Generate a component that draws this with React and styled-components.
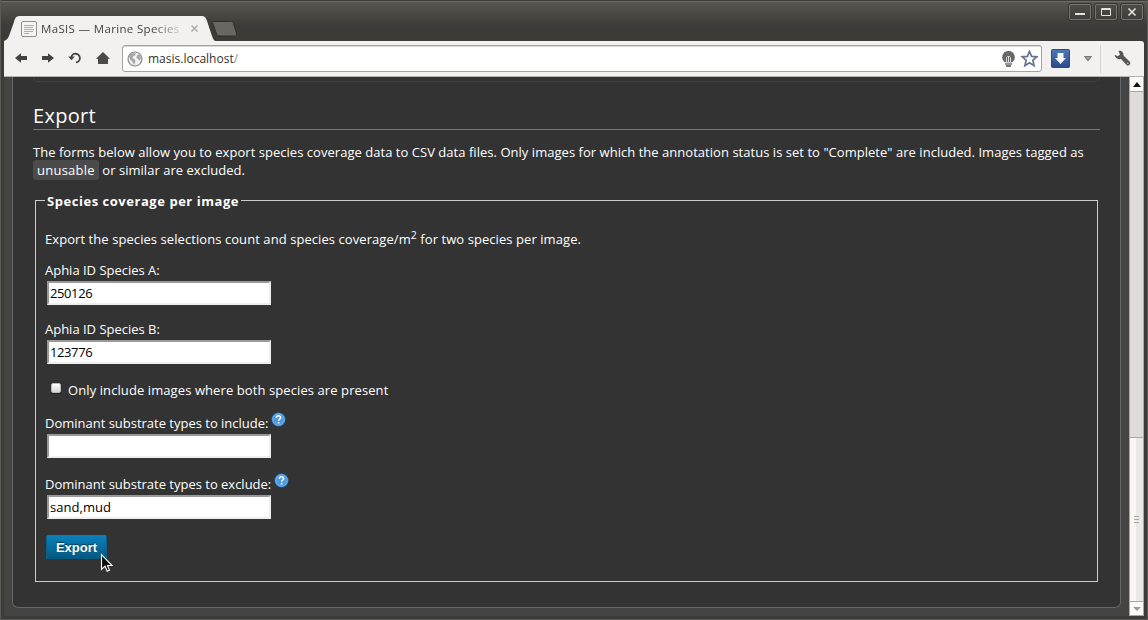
import React from "react";
import styled, { createGlobalStyle } from "styled-components";

const Global = createGlobalStyle`
  * { box-sizing: border-box; }
  html, body { margin: 0; padding: 0; overflow: hidden; }
  body { font-family: "Open Sans", "Noto Sans", sans-serif; font-size: 13px; }
  svg { display: block; flex: none; }
`;

const Window = styled.div`
  position: relative;
  width: 1148px;
  height: 620px;
  display: flex;
  flex-direction: column;
  background: linear-gradient(#5a5952 0, #57564f 2px, #3c3b37 26px, #3c3b37 100%);
  border: solid #5a5a56;
  border-width: 0 1px 1px;
  box-shadow: inset 0 1px #3d3d3b, inset 0 2px #6d6c66;
  padding: 0 3px 3px;
`;

const TitleBar = styled.div`
  height: 41px;
  flex: none;
  display: flex;
  align-items: flex-end;
`;

const Tab = styled.div`
  position: relative;
  z-index: 0;
  width: 212px;
  height: 25px;
  display: flex;
  align-items: center;
  padding-left: 17px;
`;

const TabShape = styled.svg`
  position: absolute;
  z-index: -1;
  left: 0;
  top: 0;
`;

const TabTitle = styled.div`
  width: 143px;
  margin-left: 4px;
  margin-right: 6px;
  white-space: nowrap;
  font-size: 11.5px;
  line-height: 18px;
  color: #44443f;
  letter-spacing: 0.34px;
  mask-image: linear-gradient(90deg, #000 112px, transparent 145px);
`;

const NewTab = styled.svg`
  margin: 0 auto 3px -4px;
`;

const WindowButtons = styled.div`
  display: flex;
  gap: 4px;
  align-self: flex-start;
  margin: 4px 1px 0 0;
`;

const WindowButton = styled.div`
  width: 22px;
  height: 16px;
  border: 1px solid #75746d;
  border-radius: 2px;
  background: linear-gradient(#4c4b45, #403f3a);
  box-shadow: 0 0 0 1px #383733;
`;

const Toolbar = styled.div`
  height: 36px;
  flex: none;
  display: flex;
  align-items: center;
  background: #f2f1f0;
  border-bottom: 1px solid #b5b4b2;
  border-radius: 0 3px 0 0;
  padding: 0 12px 0 9px;
`;

const NavIcons = styled.div`
  display: flex;
  gap: 11px;
  width: 109px;
  margin-top: -1px;
`;

const AddressBar = styled.div`
  width: 920px;
  height: 27px;
  display: flex;
  align-items: center;
  padding: 0 3px 0 4px;
  background: #fff;
  border: 1px solid #a3a29f;
  border-radius: 3px;
  box-shadow: inset 0 1px #d9d9d9;
`;

const Url = styled.div`
  flex: 1;
  margin-left: 5px;
  font-size: 12px;
  line-height: 18px;
  color: #33332f;
  span { color: #8b8b8b; }
`;

const AddressIcons = styled.div`
  display: flex;
  gap: 4px;
  align-items: center;
`;

const Extension = styled.div`
  display: flex;
  align-items: center;
  gap: 14px;
  margin-left: 9px;
`;

const Divider = styled.div`
  width: 1px;
  height: 28px;
  margin: 0 13px 0 8px;
  background: #d4d3d1;
`;

const Viewport = styled.div`
  flex: 1;
  min-height: 0;
  display: flex;
  background: #444;
`;

const Panel = styled.main`
  flex: 1;
  margin: 0 8px;
  height: 531px;
  padding: 0 20px;
  color: #fff;
  background: #333;
  border: 1px solid #666;
  border-top: 0;
  border-radius: 0 0 6px 6px;
  line-height: 18px;
`;

const PreviousSection = styled.div`
  height: 5px;
  border: 1px solid #414141;
  border-top: 0;
  border-radius: 0 0 5px 5px;
`;

const Heading = styled.h2`
  height: 26px;
  margin: 22px 0 13px;
  border-bottom: 1px solid #777;
  font-size: 20px;
  line-height: 24px;
  font-weight: 400;
  letter-spacing: 0.3px;
`;

const Intro = styled.p`
  margin: 0 0 12px;
  letter-spacing: 0.034px;
`;

const Tag = styled.span`
  padding: 1px 4px;
  border-radius: 3px;
  background: #4b4b4b;
  letter-spacing: 0.25px;
`;

const Fieldset = styled.fieldset`
  height: 391px;
  margin: 0 2px;
  padding: 0 9px;
  border: 1px solid #ccc;
`;

const Legend = styled.legend`
  height: 18px;
  padding: 0 2px;
  font-weight: 700;
  line-height: 20px;
  letter-spacing: 0.54px;
`;

const Description = styled.p`
  height: 18px;
  margin: 21px 0 13px;
  letter-spacing: 0.07px;
  sup { font-size: 10.5px; line-height: 0; vertical-align: 5px; }
`;

const Field = styled.div`
  margin-bottom: ${(p) => p.$gap}px;
`;

const FieldLabel = styled.label`
  display: flex;
  height: 18px;
  white-space: nowrap;
  letter-spacing: -0.01px;
`;

const HelpIcon = styled.svg`
  margin: -2px 0 0 3px;
`;

const Input = styled.input`
  display: block;
  width: 224px;
  height: 24px;
  margin: 2px 0 0 2px;
  padding: 0 1px;
  border: 2px solid;
  border-color: #999 #eee #eee #999;
  border-radius: 0;
  outline: 0;
  background: #fff;
  color: #000;
  font: inherit;
  letter-spacing: ${(p) => (p.$numeric ? "-0.4px" : "0.05px")};
`;

const CheckRow = styled.label`
  display: flex;
  align-items: center;
  height: 18px;
  margin: 0 0 15px 6px;
  letter-spacing: 0.09px;
`;

const CheckBox = styled.span`
  width: 10px;
  height: 10px;
  margin: -4px 7px 0 0;
  border: 1px solid #bbb;
  border-radius: 2px;
  background: linear-gradient(#fff, #d5d5d5);
  box-shadow: 0 1px 1px #222;
`;

const ExportButton = styled.button`
  display: block;
  width: 61px;
  height: 25px;
  margin-left: 1px;
  padding: 0;
  border: 1px solid;
  border-color: #0c7ab3 #08608f #05415f;
  border-radius: 2px;
  background: linear-gradient(#0b80ba, #04577f);
  color: #fff;
  font: bold 13px/23px "Liberation Sans", Arial, sans-serif;
  text-shadow: 0 -1px 1px #0008;
`;

const ScrollBar = styled.div`
  width: 15px;
  display: flex;
  flex-direction: column;
  background: #dddcda;
  border: solid #aaa8a4;
  border-width: 0 1px;
`;

const ScrollButton = styled.div`
  height: 15px;
  flex: none;
  display: flex;
  align-items: center;
  justify-content: center;
  background: #fbfaf9;
  border: solid #aaa8a4;
  border-width: ${(p) => (p.$top ? "0 0 1px" : "1px 0")};
`;

const Thumb = styled.div`
  height: 164px;
  margin-top: auto;
  display: flex;
  flex-direction: column;
  align-items: center;
  justify-content: center;
  gap: 2px;
  border-top: 1px solid #aaa8a4;
  background: linear-gradient(90deg, #f8f7f6 50%, #eae9e8 50%);
`;

const Grip = styled.i`
  width: 5px;
  height: 1px;
  background: #aaa8a4;
`;

const Pointer = styled.svg`
  position: absolute;
  left: 98px;
  top: 552px;
`;

const Help = () => (
  <HelpIcon width="15" height="15" viewBox="0 0 15 15">
    <circle cx="7.5" cy="7.5" r="7" fill="#2d75c2" />
    <circle cx="7.5" cy="7.5" r="5.8" fill="#4f9add" stroke="#8fc0ea" strokeWidth=".8" />
    <path d="M5.3 5.7C5.5 2.9 9.8 3.1 9.6 5.7c-.1 1.3-2 1.4-2 3.1" fill="none" stroke="#fff" strokeWidth="1.5" />
    <path d="M6.8 10h1.6v1.5H6.8z" fill="#fff" />
  </HelpIcon>
);

const Arrow = ({ flip }) => (
  <svg width="16" height="16" viewBox="0 0 16 16">
    <path transform={flip ? "translate(16) scale(-1 1)" : undefined} d="M2 8 8 3.200v2.900h6v3.800H8v2.900z" fill="#42423f" />
  </svg>
);

function TextField({ label, value, help, gap, numeric }) {
  return (
    <Field $gap={gap}>
      <FieldLabel>{label}{help && <Help />}</FieldLabel>
      <Input defaultValue={value} $numeric={numeric} />
    </Field>
  );
}

export default function App() {
  return (
    <Window>
      <Global />
      <TitleBar>
        <Tab>
          <TabShape width="212" height="25" viewBox="0 0 212 25">
            <path d="M0 25c3-1 4-3 5-5l5-14c1-4 2-6 6-6h181c4 0 5 2 6 5l5 15c1 3 2 5 4 5z" fill="#f2f1f0" />
          </TabShape>
          <svg width="16" height="16" viewBox="0 0 16 16">
            <rect x=".5" y=".5" width="15" height="15" rx="1.5" fill="#f4f4f2" stroke="#90908c" />
            <path d="M3 4.500h10M3 6.500h9M3 8.500h10M3 10.500h9M3 12.500h5" stroke="#b0b0ac" />
          </svg>
          <TabTitle>MaSIS — Marine Species I</TabTitle>
          <svg width="9" height="9" viewBox="0 0 9 9">
            <path d="m1.500 1.500 6 6m0-6-6 6" stroke="#adadaa" strokeWidth="1.600" />
          </svg>
        </Tab>
        <NewTab width="25" height="18" viewBox="0 0 25 18">
          <path d="M1.500 1.500h17c2 0 2.500.5 3 2l3 10c.5 2 0 2.500-2 2.500H8c-2 0-3-.5-3.500-2L.8 3.500C.4 2 .5 1.500 1.500 1.500z" fill="#686762" stroke="#302f2c" />
        </NewTab>
        <WindowButtons>
          <WindowButton>
            <svg width="20" height="14"><path d="M5 8h10v2H5z" fill="#e4e3df" /></svg>
          </WindowButton>
          <WindowButton>
            <svg width="20" height="14"><path d="M5.500 3.500h9v7h-9zM5 4.500h10" fill="none" stroke="#e4e3df" /></svg>
          </WindowButton>
          <WindowButton>
            <svg width="20" height="14"><path d="m6.500 3.500 7 7m0-7-7 7" stroke="#e4e3df" strokeWidth="1.600" /></svg>
          </WindowButton>
        </WindowButtons>
      </TitleBar>
      <Toolbar>
        <NavIcons>
          <Arrow />
          <Arrow flip />
          <svg width="16" height="16" viewBox="0 0 16 16">
            <path d="M4.300 7.500A4.300 4.300 0 1 1 9 12.300" fill="none" stroke="#42423f" strokeWidth="1.800" />
            <path d="M1.300 6.500h6.400L4.500 10.300z" fill="#42423f" />
          </svg>
          <svg width="17" height="16" viewBox="0 0 17 16">
            <path d="m9 2 7 6.800h-2V14H4V8.800H2z" fill="#4a4a47" />
          </svg>
        </NavIcons>
        <AddressBar>
          <svg width="16" height="16" viewBox="0 0 16 16">
            <circle cx="8" cy="8" r="7" fill="#f3f3f3" stroke="#888" strokeWidth="1.200" />
            <path d="M3 3.500 6 2l3 .5-1 2L6 5.500 5.500 7 8 8.500l.5 2L7 14l-1.500-3L3.500 9 2 6zM10 4l2.500-.5L14 7l-1.500 3-1.500-2-1.500-1z" fill="#a8a8a8" />
          </svg>
          <Url>masis.localhost<span>/</span></Url>
          <AddressIcons>
            <svg width="17" height="18" viewBox="0 0 17 18">
              <path d="M9.500 1a6.200 6.200 0 0 1 4 11H5.500a6.200 6.200 0 0 1 4-11z" fill="#686868" />
              <path d="M7.500 12V7.500L8.500 6.500h2l1 1V12M9.500 7v5" fill="none" stroke="#ddd" />
              <path d="M6 12.500h7V15H6z" fill="#999" />
              <path d="M7 15h5v2H7z" fill="#777" />
            </svg>
            <svg width="18" height="18" viewBox="0 0 18 18">
              <path d="m9.500 1.500 2.100 4.900 5.200.4-4 3.500 1.300 5.300-4.600-2.900-4.600 2.900 1.300-5.300-4-3.500 5.200-.4z" fill="#fff" stroke="#66758f" strokeWidth="1.700" />
            </svg>
          </AddressIcons>
        </AddressBar>
        <Extension>
          <svg width="19" height="19" viewBox="0 0 19 19">
            <defs>
              <linearGradient id="blue" x2="0" y2="1">
                <stop stopColor="#5078b4" />
                <stop offset="1" stopColor="#284b8b" />
              </linearGradient>
            </defs>
            <rect x=".5" y=".5" width="18" height="18" rx="1" fill="url(#blue)" stroke="#294a83" />
            <path d="M6.500 4h6v5H15l-5.500 6L4 9h2.500z" fill="#f4f4f4" />
          </svg>
          <svg width="8" height="6"><path d="M.5.500h7L4 5z" fill="#999" stroke="#777" /></svg>
        </Extension>
        <Divider />
        <svg width="17" height="17" viewBox="0 0 17 17">
          <path d="M4.500 1C7.500.3 9.800 2.400 9.500 5.500l6.300 6.200c1.600 2.200-1 4.800-3.200 3.200L7 9C4 9.700.8 8 .6 4.800l3.200 1.400L6 4.500z" fill="#555552" />
          <circle cx="13.800" cy="13.200" r=".8" fill="#ccc" />
        </svg>
      </Toolbar>
      <Viewport>
        <Panel>
          <PreviousSection />
          <Heading>Export</Heading>
          <Intro>
            The forms below allow you to export species coverage data to CSV data files. Only images for which the annotation status is set to "Complete" are included. Images tagged as <Tag>unusable</Tag> or similar are excluded.
          </Intro>
          <Fieldset>
            <Legend>Species coverage per image</Legend>
            <Description>Export the species selections count and species coverage/m<sup>2</sup> for two species per image.</Description>
            <TextField label="Aphia ID Species A:" value="250126" numeric gap={15} />
            <TextField label="Aphia ID Species B:" value="123776" numeric gap={17} />
            <CheckRow><CheckBox />Only include images where both species are present</CheckRow>
            <TextField label="Dominant substrate types to include:" value="" help gap={17} />
            <TextField label="Dominant substrate types to exclude:" value="sand,mud" help gap={16} />
            <ExportButton>Export</ExportButton>
          </Fieldset>
        </Panel>
        <ScrollBar>
          <ScrollButton $top><svg width="8" height="5"><path d="M0 5h8L4 0z" fill="#111" /></svg></ScrollButton>
          <Thumb><Grip /><Grip /><Grip /></Thumb>
          <ScrollButton><svg width="8" height="4"><path d="M0 0h8L4 4z" fill="#999" /></svg></ScrollButton>
        </ScrollBar>
      </Viewport>
      <Pointer width="15" height="22" viewBox="0 0 15 22">
        <path d="M2.500 2.500v15l3.500-3.300 2.200 5 2.300-1-2-4.700h4.500z" fill="#111" stroke="#fff" strokeWidth="1.100" />
      </Pointer>
    </Window>
  );
}
